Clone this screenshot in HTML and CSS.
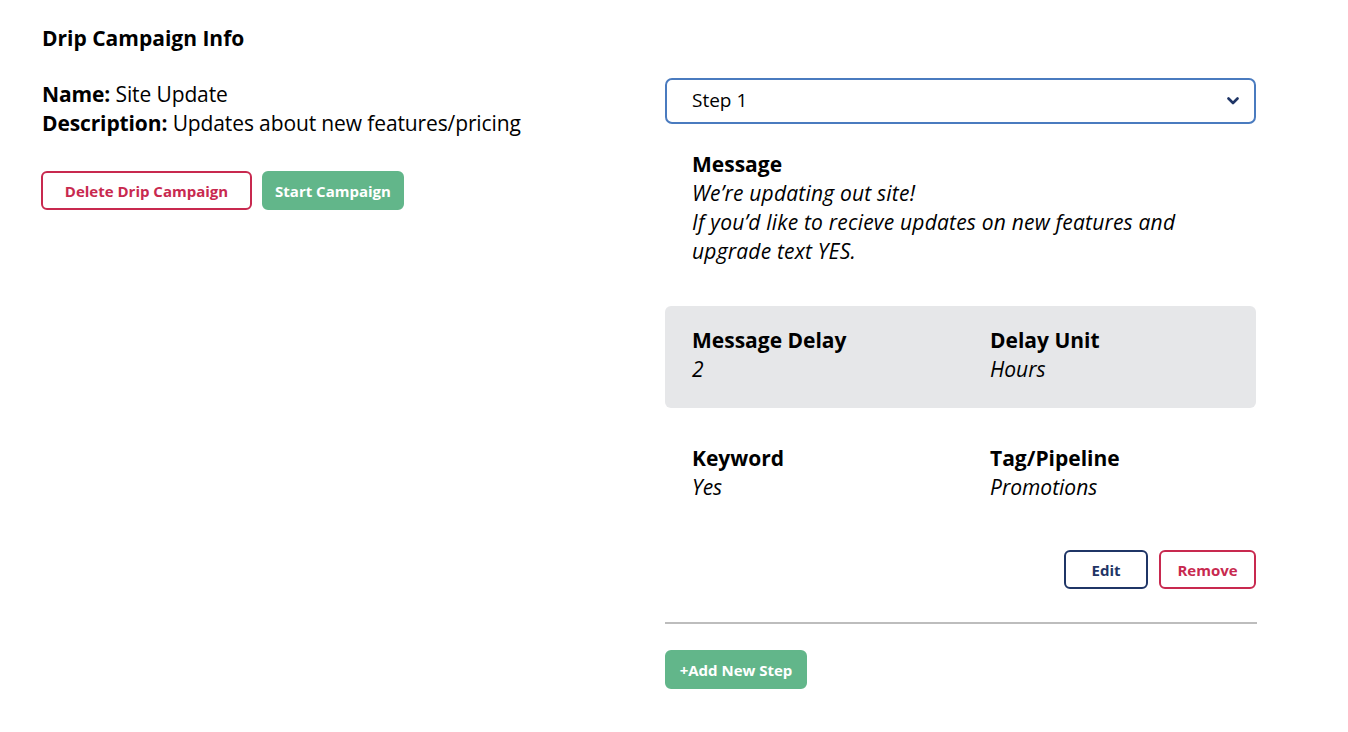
FILE: index.html
```html
<!DOCTYPE html>
<html>
<head>
<meta charset="utf-8">
<link rel="stylesheet" href="styles.css">
</head>
<body>
<div class="page">
  <section class="info">
    <h2 class="title">Drip Campaign Info</h2>
    <div class="details">
      <div><b>Name:</b> Site Update</div>
      <div><b>Description:</b> Updates about new features/pricing</div>
    </div>
    <div class="actions">
      <button class="btn btn-outline-red btn-delete">Delete Drip Campaign</button>
      <button class="btn btn-green btn-start">Start Campaign</button>
    </div>
  </section>
  <section class="steps">
    <div class="select">
      <span>Step 1</span>
      <svg class="chev" width="12" height="8" viewBox="0 0 12 8"><path d="M1.5 1.5 L6 6 L10.5 1.5" fill="none" stroke="#1f3566" stroke-width="2.6" stroke-linecap="round" stroke-linejoin="round"/></svg>
    </div>
    <div class="message">
      <div class="label">Message</div>
      <div class="value">We’re updating out site!<br>If you’d like to recieve updates on new features and<br>upgrade text YES.</div>
    </div>
    <div class="grid gray">
      <div><div class="label">Message Delay</div><div class="value">2</div></div>
      <div><div class="label">Delay Unit</div><div class="value">Hours</div></div>
    </div>
    <div class="grid plain">
      <div><div class="label">Keyword</div><div class="value">Yes</div></div>
      <div><div class="label">Tag/Pipeline</div><div class="value">Promotions</div></div>
    </div>
    <div class="step-actions">
      <button class="btn btn-outline-navy btn-edit">Edit</button>
      <button class="btn btn-outline-red btn-remove">Remove</button>
    </div>
    <hr class="divider">
    <button class="btn btn-green btn-add">+Add New Step</button>
  </section>
</div>
</body>
</html>
```

FILE: styles.css
```css
* { box-sizing: border-box; }
body {
  margin: 0;
  font-family: "Open Sans", "Lato", sans-serif;
  color: #000;
  background: #fff;
}
.page {
  display: flex;
  padding: 24px 0 0 41px;
}
.info {
  width: 624px;
  flex: none;
}
.title {
  margin: 0;
  font-size: 21px;
  line-height: 29px;
  font-weight: 700;
  padding-left: 1px;
}
.details {
  margin-top: 27px;
  font-size: 21px;
  line-height: 29px;
  padding-left: 1px;
  letter-spacing: -0.12px;
}
.details b { font-weight: 700; }
.actions {
  margin-top: 33px;
  display: flex;
  gap: 10px;
}
.btn {
  height: 39px;
  border-radius: 6px;
  font-family: inherit;
  font-size: 15px;
  font-weight: 700;
  border: 2px solid transparent;
  background: #fff;
  padding: 0;
  cursor: pointer;
}
.btn-outline-red { border-color: #c8294f; color: #c8294f; }
.btn-outline-navy { border-color: #1f3566; color: #1f3566; }
.btn-green { background: #62b68a; border-color: #62b68a; color: #fff; }
.btn-delete { width: 211px; }
.btn-start { width: 142px; }
.btn-edit { width: 84px; }
.btn-remove { width: 97px; }
.btn-add { width: 142px; }
.steps {
  width: 591px;
  flex: none;
  padding-top: 54px;
}
.select {
  height: 46px;
  border: 2px solid #4a7bbf;
  border-radius: 7px;
  display: flex;
  align-items: center;
  justify-content: space-between;
  padding: 0 15px 0 25px;
  font-size: 19px;
  line-height: 24px;
}
.select span { margin-top: -2px; }
.chev { display: block; }
.label {
  font-size: 21px;
  line-height: 29px;
  font-weight: 700;
}
.value {
  font-size: 21px;
  line-height: 29px;
  font-style: italic;
}
.message .value { letter-spacing: 0.2px; }
.message {
  padding: 26px 27px 0;
}
.grid {
  display: grid;
  grid-template-columns: 298px 1fr;
  padding: 0 27px;
}
.gray {
  margin-top: 40px;
  background: #e6e7e9;
  border-radius: 6px;
  padding-top: 20px;
  padding-bottom: 24px;
}
.plain {
  margin-top: 36px;
}
.step-actions {
  margin-top: 48px;
  display: flex;
  justify-content: flex-end;
  gap: 11px;
}
.divider {
  margin: 33px 0 0;
  border: 0;
  border-top: 2px solid #bdbdbd;
  width: 592px;
}
.btn-add { margin-top: 26px; }
```
